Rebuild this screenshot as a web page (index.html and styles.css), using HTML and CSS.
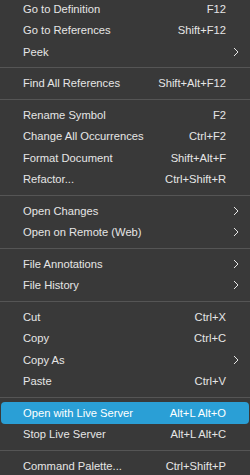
FILE: index.html
```html
<!DOCTYPE html>
<html lang="en">
<head>
  <meta charset="UTF-8" />
  <title>Context menu</title>
  <link rel="stylesheet" href="styles.css">
</head>
<body>
  <div class="menu">
    <div class="item"><span class="label">Go to Definition</span><span class="keys">F12</span><span class="sub"></span></div>
    <div class="item"><span class="label">Go to References</span><span class="keys">Shift+F12</span><span class="sub"></span></div>
    <div class="item"><span class="label">Peek</span><span class="keys"></span><span class="sub"><svg width="6" height="10" viewBox="0 0 6 10"><path d="M1 1l4 4-4 4" fill="none" stroke="currentColor" stroke-width="1"/></svg></span></div>
    <div class="sep"></div>
    <div class="item"><span class="label">Find All References</span><span class="keys">Shift+Alt+F12</span><span class="sub"></span></div>
    <div class="sep"></div>
    <div class="item"><span class="label">Rename Symbol</span><span class="keys">F2</span><span class="sub"></span></div>
    <div class="item"><span class="label">Change All Occurrences</span><span class="keys">Ctrl+F2</span><span class="sub"></span></div>
    <div class="item"><span class="label">Format Document</span><span class="keys">Shift+Alt+F</span><span class="sub"></span></div>
    <div class="item"><span class="label">Refactor...</span><span class="keys">Ctrl+Shift+R</span><span class="sub"></span></div>
    <div class="sep"></div>
    <div class="item"><span class="label">Open Changes</span><span class="keys"></span><span class="sub"><svg width="6" height="10" viewBox="0 0 6 10"><path d="M1 1l4 4-4 4" fill="none" stroke="currentColor" stroke-width="1"/></svg></span></div>
    <div class="item"><span class="label">Open on Remote (Web)</span><span class="keys"></span><span class="sub"><svg width="6" height="10" viewBox="0 0 6 10"><path d="M1 1l4 4-4 4" fill="none" stroke="currentColor" stroke-width="1"/></svg></span></div>
    <div class="sep"></div>
    <div class="item"><span class="label">File Annotations</span><span class="keys"></span><span class="sub"><svg width="6" height="10" viewBox="0 0 6 10"><path d="M1 1l4 4-4 4" fill="none" stroke="currentColor" stroke-width="1"/></svg></span></div>
    <div class="item"><span class="label">File History</span><span class="keys"></span><span class="sub"><svg width="6" height="10" viewBox="0 0 6 10"><path d="M1 1l4 4-4 4" fill="none" stroke="currentColor" stroke-width="1"/></svg></span></div>
    <div class="sep"></div>
    <div class="item"><span class="label">Cut</span><span class="keys">Ctrl+X</span><span class="sub"></span></div>
    <div class="item"><span class="label">Copy</span><span class="keys">Ctrl+C</span><span class="sub"></span></div>
    <div class="item"><span class="label">Copy As</span><span class="keys"></span><span class="sub"><svg width="6" height="10" viewBox="0 0 6 10"><path d="M1 1l4 4-4 4" fill="none" stroke="currentColor" stroke-width="1"/></svg></span></div>
    <div class="item"><span class="label">Paste</span><span class="keys">Ctrl+V</span><span class="sub"></span></div>
    <div class="sep"></div>
    <div class="item active"><span class="label">Open with Live Server</span><span class="keys">Alt+L Alt+O</span><span class="sub"></span></div>
    <div class="item"><span class="label">Stop Live Server</span><span class="keys">Alt+L Alt+C</span><span class="sub"></span></div>
    <div class="sep"></div>
    <div class="item"><span class="label">Command Palette...</span><span class="keys">Ctrl+Shift+P</span><span class="sub"></span></div>
  </div>
</body>
</html>
```

FILE: styles.css
```css
* { box-sizing: border-box; }
body {
  margin: 0;
  background: #393939;
  font-family: "Liberation Sans", Arial, sans-serif;
  font-size: 11.2px;
  color: #e6e6e6;
  overflow: hidden;
}
.menu {
  width: 250px;
  height: 475px;
  margin-top: -2px;
  background: #393939;
}
.item {
  display: flex;
  align-items: center;
  height: 21.5px;
  padding-left: 22px;
  margin: 0 1px;
  border-radius: 4px;
  white-space: nowrap;
}
.item .label { flex: 1; }
.item .keys { padding-left: 16px; }
.item .sub {
  width: 23px;
  display: flex;
  justify-content: flex-end;
  padding-right: 10px;
}
.item .sub svg { display: block; }
.item.active {
  background: #2a9fd6;
  color: #ffffff;
}
.sep {
  height: 1px;
  margin: 4.5px 0;
  background: #555555;
}
```
